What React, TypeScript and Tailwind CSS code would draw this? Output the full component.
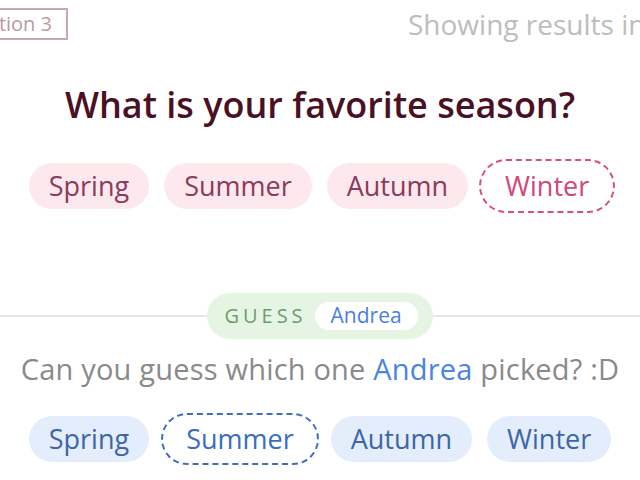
import React from "react";

const seasons = ["Spring", "Summer", "Autumn", "Winter"];

function Pill({
  label,
  tone,
  dashed,
}: {
  label: string;
  tone: "pink" | "blue";
  dashed?: boolean;
}) {
  if (tone === "pink") {
    return dashed ? (
      <div className="h-[46px] px-[22px] flex items-center rounded-full outline-2 outline-dashed outline-offset-[2px] outline-[#d4507d] text-[#d2467a]">
        {label}
      </div>
    ) : (
      <div className="h-[46px] px-[20px] flex items-center rounded-full bg-[#fde8ee] text-[#8c3a5d]">
        {label}
      </div>
    );
  }
  return dashed ? (
    <div className="h-[46px] px-[22px] flex items-center rounded-full outline-2 outline-dashed outline-offset-[1px] outline-[#3d6ec2] text-[#3a6dc2]">
      {label}
    </div>
  ) : (
    <div className="h-[46px] px-[20px] flex items-center rounded-full bg-[#e4edfb] text-[#3d66a6]">
      {label}
    </div>
  );
}

export default function App() {
  return (
    <div
      className="w-[640px] h-[480px] bg-white overflow-hidden flex flex-col"
      style={{ fontFamily: "'Open Sans', Lato, sans-serif" }}
    >
      {/* header */}
      <div className="flex items-start justify-between pt-[8px] h-[40px]">
        <div className="-ml-[72px] w-[140px] h-[32px] border-2 border-[#cba8b0] flex items-center justify-end pr-[14px] text-[20px] font-medium text-[#b99aa1] whitespace-nowrap">
          Question 3
        </div>
        <div className="w-[232px] whitespace-nowrap text-[28px] leading-[30px] font-medium text-[#bdbdbd] pt-[1px]">
          Showing results in Room
        </div>
      </div>

      {/* question */}
      <h1 className="mt-[44px] text-center text-[36px] leading-[42px] font-semibold text-[#4a1024]">
        What is your favorite season?
      </h1>

      <div className="mt-[37px] flex justify-center gap-[15px] text-[27px] font-medium">
        {seasons.map((s) => (
          <Pill key={s} label={s} tone="pink" dashed={s === "Winter"} />
        ))}
      </div>

      {/* guess divider */}
      <div className="mt-[84px] flex items-center">
        <div className="flex-1 h-[2px] bg-[#e6e6e6]" />
        <div className="h-[46px] rounded-full bg-[#e5f4e3] flex items-center pl-[17px] pr-[15px] gap-[8px]">
          <span className="text-[20px] tracking-[4px] font-medium text-[#6e9c6e]">GUESS</span>
          <span className="h-[28px] px-[16px] rounded-full bg-white flex items-center text-[21px] font-medium text-[#4a7fdf]">
            Andrea
          </span>
        </div>
        <div className="flex-1 h-[2px] bg-[#e6e6e6]" />
      </div>

      <p className="mt-[13px] text-center text-[29px] leading-[34px] tracking-[0.2px] font-medium text-[#8a8a8a] whitespace-nowrap">
        Can you guess which one <span className="text-[#4a85df]">Andrea</span> picked? :D
      </p>

      <div className="mt-[30px] flex justify-center gap-[15px] text-[27px] font-medium">
        {seasons.map((s) => (
          <Pill key={s} label={s} tone="blue" dashed={s === "Summer"} />
        ))}
      </div>
    </div>
  );
}
